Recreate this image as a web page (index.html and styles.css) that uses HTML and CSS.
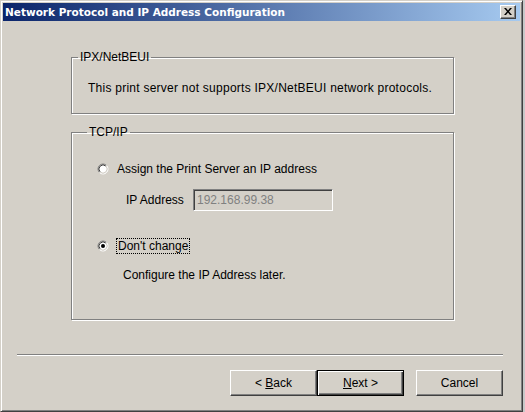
FILE: index.html
```html
<!DOCTYPE html>
<html>
<head>
<meta charset="utf-8">
<link rel="stylesheet" href="styles.css">
</head>
<body>
<div class="window">
  <div class="titlebar">
    <span class="title">Network Protocol and IP Address Configuration</span>
    <span class="close"><svg width="8" height="7" viewBox="0 0 8 7"><path d="M0 0h2l2 2.5 2-2.5h2l-3 3.5 3 3.5h-2l-2-2.5-2 2.5h-2l3-3.5z" fill="#000"/></svg></span>
  </div>
  <div class="content">
    <fieldset class="group g1">
      <legend>IPX/NetBEUI</legend>
      <p class="text">This print server not supports IPX/NetBEUI network protocols.</p>
    </fieldset>
    <fieldset class="group g2">
      <legend>TCP/IP</legend>
      <div class="radio-row r1">
        <svg class="radio" width="12" height="12" viewBox="0 0 12 12">
          <circle cx="6" cy="6" r="4" fill="#fff"/>
          <path d="M2.46 9.54A5 5 0 0 1 9.54 2.46" fill="none" stroke="#808080"/>
          <path d="M9.54 2.46A5 5 0 0 1 2.46 9.54" fill="none" stroke="#fff"/>
          <path d="M3.17 8.83A4 4 0 0 1 8.83 3.17" fill="none" stroke="#404040"/>
          <path d="M8.83 3.17A4 4 0 0 1 3.17 8.83" fill="none" stroke="#d4d0c8"/>
        </svg>
        <span>Assign the Print Server an IP address</span>
      </div>
      <div class="ip-row">
        <span class="ip-label">IP Address</span>
        <div class="input">192.168.99.38</div>
      </div>
      <div class="radio-row r2">
        <svg class="radio" width="12" height="12" viewBox="0 0 12 12">
          <circle cx="6" cy="6" r="4" fill="#fff"/>
          <path d="M2.46 9.54A5 5 0 0 1 9.54 2.46" fill="none" stroke="#808080"/>
          <path d="M9.54 2.46A5 5 0 0 1 2.46 9.54" fill="none" stroke="#fff"/>
          <path d="M3.17 8.83A4 4 0 0 1 8.83 3.17" fill="none" stroke="#404040"/>
          <path d="M8.83 3.17A4 4 0 0 1 3.17 8.83" fill="none" stroke="#d4d0c8"/>
          <circle cx="6" cy="6" r="2" fill="#000"/>
        </svg>
        <span class="focus">Don't change</span>
      </div>
      <p class="note">Configure the IP Address later.</p>
    </fieldset>
    <div class="separator"></div>
    <div class="buttons">
      <button class="btn back">&lt; <u>B</u>ack</button>
      <button class="btn next default"><u>N</u>ext &gt;</button>
      <button class="btn cancel">Cancel</button>
    </div>
  </div>
</div>
</body>
</html>
```
FILE: styles.css
```css
html, body {
  margin: 0;
  padding: 0;
  background: #c8c8c8;
}
body {
  width: 525px;
  height: 412px;
  overflow: hidden;
}
.window {
  width: 523px;
  height: 412px;
  box-sizing: border-box;
  border: 1px solid;
  border-color: #d4d0c8 #404040 #404040 #d4d0c8;
  box-shadow: inset 1px 1px #fff, inset -1px -1px #808080;
  padding: 2px;
  background: #d4d0c8;
  display: flex;
  flex-direction: column;
  font-family: "Liberation Sans", Arial, sans-serif;
  font-size: 12px;
  color: #000;
}
.titlebar {
  height: 18px;
  flex: none;
  display: flex;
  align-items: center;
  justify-content: space-between;
  padding: 0 4px 0 2px;
  background: linear-gradient(to right, #0a246a, #a6caf0);
}
.title {
  color: #fff;
  font-family: "DejaVu Sans", Verdana, sans-serif;
  font-weight: bold;
  font-size: 10.5px;
  line-height: 14px;
}
.close {
  width: 16px;
  height: 14px;
  box-sizing: border-box;
  border: 1px solid;
  border-color: #fff #404040 #404040 #fff;
  box-shadow: inset -1px -1px #808080;
  background: #d4d0c8;
  display: flex;
  align-items: center;
  justify-content: center;
  padding: 0 1px 1px 0;
}
.content {
  flex: 1;
  display: flex;
  flex-direction: column;
}
.group {
  width: 383px;
  box-sizing: border-box;
  margin: 0 0 0 68px;
  border: 1px solid #808080;
  box-shadow: inset 1px 1px #fff, 1px 1px #fff;
  min-width: 0;
}
.group legend {
  padding: 0 2px;
  margin-left: -10px;
  line-height: 13px;
  font-size: 12px;
}
.g1 {
  margin-top: 30px;
  padding: 18px 16px 18px 16px;
}
.g2 {
  margin-top: 12px;
  padding: 23px 16px 37px 25px;
}
.text, .note {
  margin: 0;
  line-height: 13px;
}
.text {
  letter-spacing: 0.25px;
}
.radio-row {
  display: flex;
  align-items: center;
}
.r1 {
  height: 13px;
  gap: 8px;
}
.r2 {
  margin-top: 27px;
  height: 16px;
  gap: 7px;
}
.radio {
  flex: none;
  display: block;
}
.focus {
  border: 1px dotted #000;
  padding: 0 1px;
  line-height: 14px;
}
.ip-row {
  margin-top: 14px;
  display: flex;
  align-items: center;
  height: 22px;
}
.ip-label {
  margin-left: 29px;
  width: 67px;
}
.input {
  width: 140px;
  height: 22px;
  box-sizing: border-box;
  border: 1px solid;
  border-color: #808080 #fff #fff #808080;
  box-shadow: inset 1px 1px #404040, inset -1px -1px #d4d0c8;
  padding-left: 3px;
  color: #808080;
  line-height: 20px;
  background: #d4d0c8;
}
.note {
  margin-top: 15px;
  margin-left: 26px;
}
.separator {
  margin: 34px 0 0 14px;
  width: 486px;
  border-top: 1px solid #808080;
  border-bottom: 1px solid #fff;
}
.buttons {
  margin-top: 14px;
  display: flex;
  justify-content: flex-end;
  padding-right: 17px;
}
.btn {
  width: 87px;
  height: 26px;
  box-sizing: border-box;
  margin: 0;
  padding: 0;
  font-family: "Liberation Sans", Arial, sans-serif;
  font-size: 12px;
  color: #000;
  background: #d4d0c8;
  border: 1px solid;
  border-color: #fff #404040 #404040 #fff;
  box-shadow: inset -1px -1px #808080;
}
.btn.default {
  border: 1px solid #000;
  box-shadow: inset 1px 1px #fff, inset -1px -1px #404040, inset -2px -2px #808080;
}
.cancel {
  margin-left: 12px;
}
```
